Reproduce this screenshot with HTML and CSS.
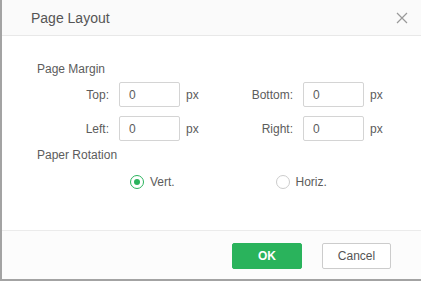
FILE: index.html
```html
<!DOCTYPE html>
<html lang="en">
<head>
    <meta charset="UTF-8">
    <title>Page Layout</title>
    <link rel="stylesheet" href="styles.css">
</head>
<body>
    <div class="dialog">
        <header class="dialog-header">
            <span class="dialog-title">Page Layout</span>
            <svg class="close-icon" width="12" height="12" viewBox="0 0 12 12">
                <path d="M1 1L11 11M11 1L1 11" stroke="#999" stroke-width="1.2" fill="none"/>
            </svg>
        </header>

        <div class="dialog-body">
            <div class="section-title">Page Margin</div>

            <div class="field-row">
                <div class="field">
                    <label class="field-label">Top:</label>
                    <input class="field-input" type="text" value="0">
                    <span class="unit">px</span>
                </div>
                <div class="field">
                    <label class="field-label">Bottom:</label>
                    <input class="field-input" type="text" value="0">
                    <span class="unit">px</span>
                </div>
            </div>

            <div class="field-row">
                <div class="field">
                    <label class="field-label">Left:</label>
                    <input class="field-input" type="text" value="0">
                    <span class="unit">px</span>
                </div>
                <div class="field">
                    <label class="field-label">Right:</label>
                    <input class="field-input" type="text" value="0">
                    <span class="unit">px</span>
                </div>
            </div>

            <div class="section-title rotation-title">Paper Rotation</div>

            <div class="radio-row">
                <div class="radio-option">
                    <span class="radio checked"></span>
                    <span class="radio-text">Vert.</span>
                </div>
                <div class="radio-option">
                    <span class="radio"></span>
                    <span class="radio-text">Horiz.</span>
                </div>
            </div>
        </div>

        <footer class="dialog-footer">
            <button class="btn btn-primary">OK</button>
            <button class="btn btn-default">Cancel</button>
        </footer>
    </div>
</body>
</html>
```

FILE: styles.css
```css
body {
    margin: 0;
    padding: 0 0 2px 2px;
    background: #a3a3a3;
    font-family: "Liberation Sans", Arial, sans-serif;
    color: #5c5c5c;
}

.dialog {
    width: 419px;
    height: 279px;
    background: #fff;
    display: flex;
    flex-direction: column;
}

.dialog-header {
    height: 35px;
    background: #fafafa;
    border-bottom: 1px solid #e8e8e8;
    display: flex;
    align-items: center;
    justify-content: space-between;
    padding: 0 13px 0 29px;
}

.dialog-title {
    font-size: 14px;
    color: #555;
}

.dialog-body {
    flex: 1;
    padding: 26px 0 0 35px;
}

.section-title {
    font-size: 12px;
    line-height: 14px;
    margin-bottom: 6px;
}

.field-row {
    display: flex;
    margin-bottom: 9px;
}

.field-row + .rotation-title {
    margin-top: -2px;
}

.field {
    width: 184px;
    display: flex;
    align-items: center;
    font-size: 12px;
}

.field-label {
    width: 72px;
    text-align: right;
    margin-right: 10px;
}

.field-input {
    width: 61px;
    height: 25px;
    box-sizing: border-box;
    border: 1px solid #d4d4d4;
    border-radius: 2px;
    padding: 0 9px;
    font-family: inherit;
    font-size: 12px;
    color: #5c5c5c;
    outline: none;
}

.unit {
    margin-left: 6px;
}

.rotation-title {
    margin-bottom: 13px;
}

.radio-row {
    display: flex;
    padding-left: 93px;
}

.radio-option {
    width: 146px;
    display: flex;
    align-items: center;
    font-size: 12px;
}

.radio {
    width: 14px;
    height: 14px;
    box-sizing: border-box;
    border: 1px solid #ccc;
    border-radius: 50%;
    margin-right: 6px;
    display: flex;
    align-items: center;
    justify-content: center;
}

.radio.checked {
    border-color: #2ab35c;
}

.radio.checked::after {
    content: "";
    width: 6px;
    height: 6px;
    border-radius: 50%;
    background: #2ab35c;
}

.dialog-footer {
    height: 49px;
    border-top: 1px solid #ebebeb;
    background: #fcfcfc;
    display: flex;
    justify-content: flex-end;
    align-items: flex-start;
    padding: 12px 30px 0 0;
    gap: 20px;
    box-sizing: border-box;
}

.btn {
    height: 26px;
    font-family: inherit;
    font-size: 12px;
    border-radius: 2px;
    cursor: pointer;
}

.btn-primary {
    width: 70px;
    background: #2ab35c;
    border: 1px solid #2ab35c;
    color: #fff;
    font-weight: bold;
}

.btn-default {
    width: 69px;
    background: #fff;
    border: 1px solid #ccc;
    color: #555;
}
```
